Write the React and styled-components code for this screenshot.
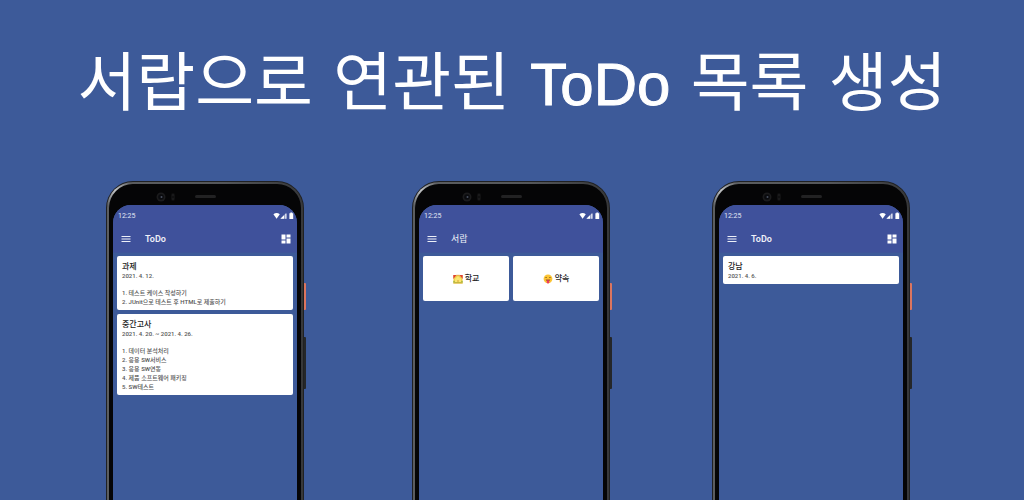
import React from "react";
import styled, { createGlobalStyle } from "styled-components";
import { MdMenu, MdDashboard } from "react-icons/md";

const GlobalStyle = createGlobalStyle`
  *, *::before, *::after { box-sizing: border-box; }
  body { margin: 0; background: #3d5a99; }
  h1, h2, h3, p, ol, ul { margin: 0; padding: 0; }
  button { font: inherit; color: inherit; border: 0; padding: 0; background: none; cursor: pointer; }
`;

const Page = styled.main`
  display: flex;
  flex-direction: column;
  height: 100vh;
  overflow: hidden;
  background: #3d5a99;
  color: #fff;
  font-family: Roboto, "Noto Sans CJK KR", sans-serif;
`;

const Headline = styled.h1`
  padding: 35px 0 50px;
  text-align: center;
  white-space: nowrap;
  font: 400 64px/96px "DejaVu Sans", "Noto Sans CJK KR", sans-serif;
`;

const Latin = styled.span`
  font-family: "Liberation Sans", sans-serif;
  font-size: 60px;
  line-height: 1;
  -webkit-text-stroke: 1px #fff;
`;

const Showcase = styled.div`
  flex: 1;
  display: grid;
  grid-template-columns: 306fr 300fr 198fr;
  padding: 0 114px 0 106px;
`;

const Frame = styled.section`
  position: relative;
  display: flex;
  width: 198px;
  padding: 1px 1px 0;
  border-radius: 27px 27px 0 0;
  background: #202123;
`;

const Rim = styled.div`
  flex: 1;
  display: flex;
  padding: 2px 2px 0;
  border-radius: 26px 26px 0 0;
  background:
    radial-gradient(circle at 9px 9px, #c4c6c8 0, #85878900 17px),
    linear-gradient(90deg, #5c5e60, #55575a 60%, #37383a);
`;

const Bezel = styled.div`
  flex: 1;
  display: flex;
  flex-direction: column;
  padding: 0 4px;
  border-radius: 24px 24px 0 0;
  background: #050506;
`;

const Sensors = styled.div`
  display: flex;
  align-items: center;
  height: 21px;
  padding: 4px 0 0 40px;
`;

const SideKey = styled.span`
  position: absolute;
  left: 100%;
  top: ${(p) => p.$top}px;
  width: 2px;
  height: ${(p) => p.$length}px;
  border-radius: 0 1px 1px 0;
  background: ${(p) => p.$color};
`;

const Screen = styled.div`
  flex: 1;
  border-radius: 18px 18px 0 0;
  overflow: hidden;
  background: #3d5a99;
`;

const TopArea = styled.header`
  background: #3f519b;
  border-bottom: 1px solid #3e5499;
`;

const StatusBar = styled.div`
  display: flex;
  justify-content: space-between;
  align-items: center;
  height: 20px;
  padding: 2px 3px 0 5px;
  font-size: 7px;
  line-height: 8px;
  color: #e3e7f3;
`;

const AppBar = styled.div`
  display: flex;
  align-items: center;
  height: 27px;
  padding: 0 5px 0 7px;
`;

const IconButton = styled.button`
  display: flex;
  font-size: 12px;
  color: ${(p) => p.$color || "#fff"};
`;

const ScreenTitle = styled.h2`
  flex: 1;
  padding-left: 13px;
  font-size: 9px;
  line-height: 12px;
  font-weight: ${(p) => p.$weight};
  color: #f0f2f9;
`;

const Cards = styled.div`
  display: flex;
  flex-direction: column;
  gap: 4px;
  padding: 3px 4px;
`;

const Card = styled.article`
  padding: 5px 5px 4px;
  border-radius: 2px;
  background: #fff;
  color: #555;
  font-size: 6px;
  line-height: 9px;
  font-weight: 500;
`;

const CardTitle = styled.h3`
  font-size: 8px;
  line-height: 11px;
  font-weight: 500;
  color: #222;
`;

const CardDate = styled.p`
  line-height: 8px;
`;

const Tasks = styled.ol`
  padding-top: 8px;
  list-style: none;
`;

const Drawers = styled.div`
  display: grid;
  grid-template-columns: 1fr 1fr;
  gap: 4px;
  padding: 3px 4px;
`;

const Drawer = styled.button`
  display: flex;
  justify-content: center;
  align-items: center;
  gap: 2px;
  && {
    height: 45px;
    border-radius: 2px;
    background: #fff;
    color: #222;
    font-size: 8px;
    line-height: 12px;
    font-weight: 500;
  }
`;

const SensorArt = () => (
  <svg width="120" height="12" viewBox="0 0 120 12" aria-hidden="true">
    <circle cx="8" cy="6" r="4.5" fill="#1b1b1c" />
    <circle cx="8" cy="6" r="2.8" fill="#0a0b0e" />
    <circle cx="8.500" cy="6" r="1" fill="#4a5260" />
    <rect x="18" y="2" width="4" height="8" rx="2" fill="#101011" />
    <circle cx="20" cy="4" r="1" fill="#1c1c1e" />
    <circle cx="20" cy="8" r="1" fill="#1c1c1e" />
    <rect x="42" y="4" width="21" height="3" rx="1.5" fill="#222223" />
  </svg>
);

const StatusIcons = () => (
  <svg width="21" height="8" viewBox="0 0 21 8" role="img" aria-label="Wi-Fi, signal, battery">
    <path d="M.4 2.2Q3.6-.2 6.8 2.2L3.6 6.8Z" fill="#fff" />
    <path d="M13.4.8V6.8H7.4Z" fill="#fff" opacity=".45" />
    <path d="M11 3.2V6.8H7.4ZM12.4 1.8h1v5h-1Z" fill="#fff" />
    <path d="M16.4 1.2h1V.6h1.8v.6h1v5.8h-3.8Z" fill="#fff" />
  </svg>
);

const SchoolIcon = () => (
  <svg width="10" height="10" viewBox="0 0 10 10" aria-hidden="true">
    <rect x=".5" y="1" width="9" height="8.5" fill="#efd04a" />
    <path d="M.3 1h3.2L.3 5ZM9.7 1H6.5l3.2 4Z" fill="#df3f35" />
    <path d="M3.2.8h3.6v1.4H3.2Z" fill="#e9b04c" />
    <path d="M5 2 8 4.8v3.2H2V4.8Z" fill="#fae673" />
    <path d="M4.3 6h1.4v2.4H4.3Z" fill="#e3b645" />
    <path d="M.3 6.8q1.2-.4 1.6 1.2h6.2q.4-1.6 1.6-1.2v2H.3Z" fill="#9fb53c" />
    <path d="M.3 8.6h9.4v.9H.3Z" fill="#dcb648" />
  </svg>
);

const FaceIcon = () => (
  <svg width="10" height="10" viewBox="0 0 10 10" aria-hidden="true">
    <circle cx="5" cy="4.8" r="4.4" fill="#fcc433" />
    <path d="M2.2 3h1.8v.8H2.200ZM6 3h1.800v.8H6Z" fill="#8a6420" />
    <path d="M2.600 5.500h4.800q-.2 1.800-2.400 1.800T2.600 5.500Z" fill="#a4502c" />
    <path d="M3.800 6.400h2.400v1.900q0 1.200-1.200 1.200T3.800 8.300Z" fill="#ee3a62" />
  </svg>
);

function Phone({ title, titleWeight = 600, dashboard, children }) {
  return (
    <Frame>
      <Rim>
        <Bezel>
          <Sensors><SensorArt /></Sensors>
          <Screen>
            <TopArea>
              <StatusBar><span>12:25</span><StatusIcons /></StatusBar>
              <AppBar>
                <IconButton type="button" aria-label="메뉴" $color="#eef0f8"><MdMenu /></IconButton>
                <ScreenTitle $weight={titleWeight}>{title}</ScreenTitle>
                {dashboard && (
                  <IconButton type="button" aria-label="서랍"><MdDashboard /></IconButton>
                )}
              </AppBar>
            </TopArea>
            {children}
          </Screen>
        </Bezel>
      </Rim>
      <SideKey $top={102} $length={27} $color="#dc755f" />
      <SideKey $top={156} $length={52} $color="#252729" />
    </Frame>
  );
}

function TodoCard({ title, date, tasks }) {
  return (
    <Card>
      <CardTitle>{title}</CardTitle>
      <CardDate>{date}</CardDate>
      {tasks && (
        <Tasks>
          {tasks.map((task, i) => <li key={task}>{i + 1}. {task}</li>)}
        </Tasks>
      )}
    </Card>
  );
}

export default function App() {
  return (
    <Page lang="ko">
      <GlobalStyle />
      <Headline>서랍으로 연관된 <Latin>ToDo</Latin> 목록 생성</Headline>
      <Showcase>
        <Phone title="ToDo" dashboard>
          <Cards>
            <TodoCard
              title="과제"
              date="2021. 4. 12."
              tasks={["테스트 케이스 작성하기", "JUnit으로 테스트 후 HTML로 제출하기"]}
            />
            <TodoCard
              title="중간고사"
              date="2021. 4. 20. ~ 2021. 4. 26."
              tasks={["데이터 분석처리", "응용 SW서비스", "응용 SW연동", "제품 소프트웨어 패키징", "SW테스트"]}
            />
          </Cards>
        </Phone>
        <Phone title="서랍" titleWeight={400}>
          <Drawers>
            <Drawer type="button"><SchoolIcon />학교</Drawer>
            <Drawer type="button"><FaceIcon />약속</Drawer>
          </Drawers>
        </Phone>
        <Phone title="ToDo" dashboard>
          <Cards>
            <TodoCard title="강남" date="2021. 4. 6." />
          </Cards>
        </Phone>
      </Showcase>
    </Page>
  );
}
